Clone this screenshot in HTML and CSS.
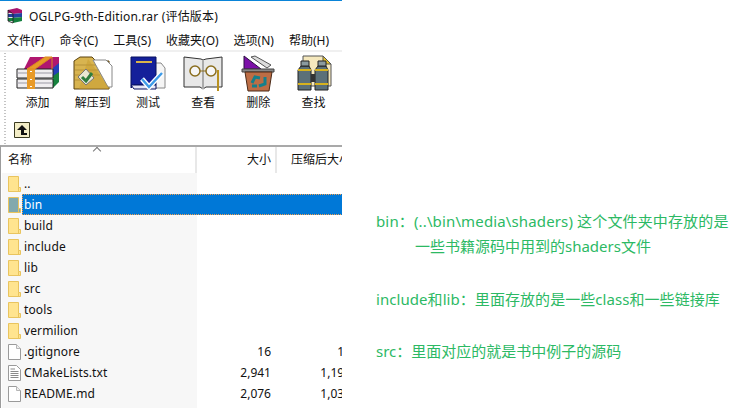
FILE: index.html
```html
<!DOCTYPE html>
<html lang="zh">
<head>
<meta charset="utf-8">
<title>OGLPG-9th-Edition.rar</title>
<link rel="stylesheet" href="styles.css">
</head>
<body>
<svg class="defs" width="0" height="0" aria-hidden="true">
  <defs>
    <symbol id="folder" viewBox="0 0 13 16">
      <path d="M.5 .5H10.5V11.5H12.5V15.5H.5Z" fill="currentColor" stroke="#e9c45e"/>
      <path d="M10.5 11.5V15.5" stroke="#e9c45e"/>
    </symbol>
    <symbol id="file" viewBox="0 0 13 16">
      <path d="M.5 .5H8.5L12.5 4.5V15.5H.5Z" fill="#fff" stroke="#9a9a9a"/>
      <path d="M8.5 .5V4.5H12.5" fill="#eee" stroke="#b5b5b5"/>
    </symbol>
    <symbol id="textfile" viewBox="0 0 13 16">
      <path d="M.5 .5H8.5L12.5 4.5V15.5H.5Z" fill="#fff" stroke="#9a9a9a"/>
      <path d="M2.5 4H7M2.5 6.5H10.5M2.5 8.5H10.5M2.5 10.5H10.5M2.5 12.5H10.5" stroke="#8a8a8a"/>
    </symbol>
  </defs>
</svg>
<main class="screen">
  <section class="app">
    <div class="titlebar">
      <svg class="appicon" width="16" height="18" viewBox="0 0 16 18">
        <path d="M1 3L10 1L15 3V6L6 7L1 6Z" fill="#a8146e"/>
        <path d="M1 6L6 7L15 6V10L6 11L1 10Z" fill="#23409f"/>
        <path d="M1 10L6 11L15 10V14L6 16L1 14Z" fill="#14803f"/>
        <path d="M1 6H6V7H1ZM1 10H6V11H1ZM1 14H6V16H1Z" fill="#e8e8e8"/>
        <path d="M1 3V14L6 16V7Z" fill="none" stroke="#1c1c1c" stroke-width=".8"/>
      </svg>
      <span>OGLPG-9th-Edition.rar (评估版本)</span>
    </div>
    <nav class="menu">
      <span>文件(F)</span><span>命令(C)</span><span>工具(S)</span><span>收藏夹(O)</span><span>选项(N)</span><span>帮助(H)</span>
    </nav>
    <div class="bands">
      <div class="toolbar">
        <div class="tool">
          <svg width="46" height="38" viewBox="0 0 46 38">
            <path d="M15 2H44V12L38 16H8Z" fill="#b0176f"/>
            <path d="M38 13L44 8V18L38 23Z" fill="#2440b8"/>
            <path d="M38 21L44 17V27L38 33Z" fill="#17833f"/>
            <path d="M2 14H38V23H2ZM2 24H38V33H2Z" fill="#f0eef0" stroke="#222"/>
            <path d="M2 18H38M2 28H38" stroke="#9b9aa5"/>
            <path d="M12 13H20V34H12Z" fill="#e89a28"/>
            <path d="M12 14L30 2H37L20 14ZM37 2V14" fill="#e89a28" stroke="#d98a20"/>
            <path d="M16 16V17M16 24V25M16 31V32" stroke="#fff" stroke-width="2"/>
          </svg>
          <span>添加</span>
        </div>
        <div class="tool">
          <svg width="42" height="38" viewBox="0 0 42 38">
            <path d="M2 6L8 2H20L24 6H37V34H2Z" fill="#d8b450" stroke="#5a4310"/>
            <path d="M3 10H36M3 15H36M3 20H28M3 25H20" stroke="#b6923a"/>
            <path d="M21 5H34L40 11V32H36Z" fill="#fff" stroke="#888"/>
            <path d="M16 4L38 34H7Z" fill="#c69a2b" opacity=".45"/>
            <path d="M14 14L22 23L14 30L6 22Z" fill="#e9e7d2" stroke="#777"/>
            <path d="M10 22L14 26L20 18" fill="none" stroke="#2e7d3e" stroke-width="3"/>
          </svg>
          <span>解压到</span>
        </div>
        <div class="tool">
          <svg width="36" height="38" viewBox="0 0 36 38">
            <path d="M22 8H31L35 13V33H22Z" fill="#f5f5f5" stroke="#888"/>
            <path d="M1 2H26V30H4L1 33Z" fill="#14209a" stroke="#07105e"/>
            <path d="M1 30H26V34H4Z" fill="#e6e6f5" stroke="#07105e"/>
            <path d="M6 7H22" stroke="#d8b34a" stroke-width="2"/>
            <path d="M12 24L19 32L32 18" fill="none" stroke="#fff" stroke-width="5"/>
            <path d="M12 24L19 32L32 18" fill="none" stroke="#3d9be8" stroke-width="2.5"/>
          </svg>
          <span>测试</span>
        </div>
        <div class="tool">
          <svg width="42" height="38" viewBox="0 0 42 38">
            <path d="M2 2L19 4L21 5L24 4L40 2V32H24L21 34L18 32H2Z" fill="#e8e8e8" stroke="#333"/>
            <path d="M21 5V34" stroke="#aaa" stroke-width="2"/>
            <circle cx="13" cy="16" r="5" fill="#f6f6f6" stroke="#8a6d1d" stroke-width="1.5"/>
            <circle cx="29" cy="16" r="5" fill="#f6f6f6" stroke="#8a6d1d" stroke-width="1.5"/>
            <path d="M18 16H24" stroke="#8a6d1d"/>
            <path d="M36 15V36" stroke="#b8911f" stroke-width="2"/>
          </svg>
          <span>查看</span>
        </div>
        <div class="tool">
          <svg width="34" height="38" viewBox="0 0 34 38">
            <path d="M3 1L20 14H3Z" fill="#7c10a8" stroke="#2a1040"/>
            <path d="M10 2L14 1L30 10L26 13Z" fill="#dcdcdc" stroke="#555"/>
            <path d="M1 14H33V17H1Z" fill="#888" stroke="#444"/>
            <path d="M4 17H31L28 36H7Z" fill="#bc6d45" stroke="#4a2a18"/>
            <path d="M11 28L14 22L19 23M24 22L24 29L18 31M11 31H16" fill="none" stroke="#14808c" stroke-width="3"/>
          </svg>
          <span>删除</span>
        </div>
        <div class="tool">
          <svg width="38" height="38" viewBox="0 0 38 38">
            <path d="M8 1H28L36 9V31H8Z" fill="#f5e8bd" stroke="#555"/>
            <path d="M28 1V9H36Z" fill="#e8c52b" stroke="#555"/>
            <path d="M6 11H14L16 15V35H3V15Z" fill="#5c7078" stroke="#222"/>
            <path d="M23 11H31L33 15V35H20V15Z" fill="#5c7078" stroke="#222"/>
            <path d="M3 15H16M20 15H33M3 29H16M20 29H33" stroke="#d6b21e" stroke-width="2"/>
            <path d="M16 19H20V27H16Z" fill="#333"/>
            <path d="M6 6H14V11H6ZM23 6H31V11H23Z" fill="#8a9a9f" stroke="#222"/>
          </svg>
          <span>查找</span>
        </div>
      </div>
      <div class="pathbar">
        <span class="upbutton">
          <svg width="16" height="16" viewBox="0 0 16 16">
            <path d="M.5 .5H15.5V15.5H.5Z" fill="#f3edc6" stroke="#3a3a20"/>
            <path d="M8 3L13 8H10V11H13V13H7V8H3Z" fill="#111"/>
          </svg>
        </span>
      </div>
    </div>
    <div class="filelist">
      <div class="row head">
        <span class="name">名称<i class="sort"></i></span>
        <span class="size">大小</span>
        <span class="packed">压缩后大小</span>
      </div>
      <div class="row"><span class="name"><svg class="ico folder"><use href="#folder"/></svg><b>..</b></span></div>
      <div class="row selected"><span class="name"><svg class="ico folder"><use href="#folder"/></svg><b>bin</b></span></div>
      <div class="row"><span class="name"><svg class="ico folder"><use href="#folder"/></svg><b>build</b></span></div>
      <div class="row"><span class="name"><svg class="ico folder"><use href="#folder"/></svg><b>include</b></span></div>
      <div class="row"><span class="name"><svg class="ico folder"><use href="#folder"/></svg><b>lib</b></span></div>
      <div class="row"><span class="name"><svg class="ico folder"><use href="#folder"/></svg><b>src</b></span></div>
      <div class="row"><span class="name"><svg class="ico folder"><use href="#folder"/></svg><b>tools</b></span></div>
      <div class="row"><span class="name"><svg class="ico folder"><use href="#folder"/></svg><b>vermilion</b></span></div>
      <div class="row"><span class="name"><svg class="ico"><use href="#file"/></svg><b>.gitignore</b></span><span class="size">16</span><span class="packed">16</span></div>
      <div class="row"><span class="name"><svg class="ico"><use href="#textfile"/></svg><b>CMakeLists.txt</b></span><span class="size">2,941</span><span class="packed">1,195</span></div>
      <div class="row"><span class="name"><svg class="ico"><use href="#file"/></svg><b>README.md</b></span><span class="size">2,076</span><span class="packed">1,030</span></div>
    </div>
  </section>
  <section class="notes">
    <p class="note first">bin：(..\bin\media\shaders) 这个文件夹中存放的是</p>
    <p class="note indent">一些书籍源码中用到的shaders文件</p>
    <p class="note gap wide">include和lib：里面存放的是一些class和一些链接库</p>
    <p class="note gap tight">src：里面对应的就是书中例子的源码</p>
  </section>
</main>
</body>
</html>
```

FILE: styles.css
```css
* { box-sizing: border-box; }
html, body { margin: 0; height: 100%; background: #fff; overflow: hidden; }
body { font-family: "Noto Sans", "Noto Sans CJK SC", sans-serif; color: #111; }
.defs { position: absolute; }
.screen { display: flex; width: 746px; height: 408px; }

.app { width: 342px; flex: none; overflow: hidden; border-top: 1px solid #0a84d8; }
.titlebar { display: flex; align-items: center; gap: 6px; height: 30px; padding-left: 7px; font-size: 12px; letter-spacing: .18px; }
.menu { display: flex; height: 19px; padding-left: 7px; font-size: 12px; line-height: 19px; }
.menu span { margin-right: 15px; white-space: nowrap; }
.bands { border-top: 2px solid #f0f0f0; background: radial-gradient(circle, #c4c4c4 .7px, transparent .8px) 4px 0 / 2px 3px repeat-y; }
.toolbar { display: flex; height: 63px; padding: 3px 0 0 10px; }
.tool { width: 55.2px; display: flex; flex-direction: column; align-items: center; font-size: 12px; line-height: 16px; }
.tool svg { height: 38px; flex: none; }
.tool span { margin-top: 2px; }
.pathbar { height: 30px; padding: 7px 0 0 14px; }
.upbutton { display: block; width: 16px; height: 16px; }
.upbutton svg { display: block; }

.filelist { border-top: 2px solid #a9a9a9; border-left: 1px solid #9c9c9c; padding-left: 1px; height: 263px; overflow: hidden; background: linear-gradient(90deg, #fff 1px, #f7f7f7 1px, #f7f7f7 196px, #fff 196px); }
.row { display: grid; grid-template-columns: 195px 80px 80px; width: 355px; height: 21px; font-size: 12px; line-height: 21px; }
.row.head { height: 26px; line-height: 26px; background: #fff; }
.head .name, .head .size { border-right: 2px solid #e8e8e8; }
.head .name { position: relative; }
.sort { position: absolute; left: 92px; top: 1px; width: 6px; height: 6px; border-left: 1px solid #777; border-top: 1px solid #777; transform: rotate(45deg); }
.name { display: flex; align-items: center; padding-left: 6px; white-space: nowrap; }
.name b { font-weight: 400; margin-left: 1px; padding-left: 2px; flex: 1; letter-spacing: .12px; }
.ico { width: 13px; height: 16px; flex: none; color: #ffe48f; }
.size, .packed { text-align: right; padding-right: 6px; }
.head .size { padding-right: 4px; }
.head .packed { text-align: left; padding: 0 0 0 14px; white-space: nowrap; }
.selected .name { grid-column: 1 / -1; }
.selected .ico { color: #82a9ad; }
.selected b { height: 21px; padding-left: 1px; line-height: 19px; color: #fff; background: #0078d7; border: 1px dotted #f0a050; }

.notes { flex: 1; padding: 211px 0 0 34px; color: #2cb964; font-size: 15px; }
.note { margin: 0; line-height: 20px; white-space: nowrap; }
.first { letter-spacing: .14px; }
.wide { letter-spacing: .06px; }
.indent { margin-top: 5px; padding-left: 39px; }
.gap { margin-top: 33px; }
.tight { margin-top: 32px; }
```
